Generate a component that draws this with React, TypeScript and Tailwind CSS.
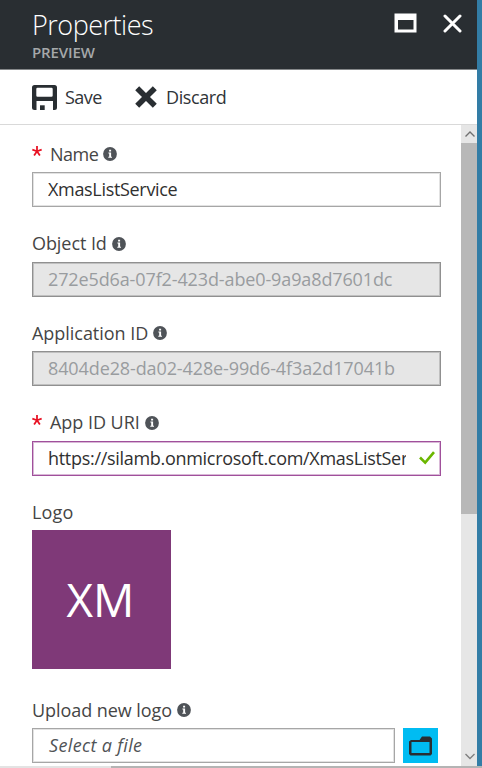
import React from "react";

function Info() {
  return (
    <svg className="ml-[5px] h-[14px] w-[14px] shrink-0" viewBox="0 0 14 14">
      <circle cx="7" cy="7" r="6.9" fill="#4f5358" />
      <path d="M5.4 5.6h2.7v4.2h.9v1H5.3v-1h.9V6.6h-.8zM6.1 2.8h2v1.7h-2z" fill="#fff" />
    </svg>
  );
}

type LabelProps = { text: string; tracking: string; required?: boolean; info?: boolean };

function Label({ text, tracking, required, info = true }: LabelProps) {
  return (
    <div className="flex h-[36px] items-center text-[18px] text-[#454545]">
      {required && (
        <svg className="mr-[8px] mb-[6px] h-[10px] w-[10px]" viewBox="0 0 9 9" stroke="#e81123" strokeWidth="1.6">
          <path d="M4.5 0v4.7M0.3 3.3l4.2 1.4M8.700 3.300L4.500 4.700M1.900 8.500l2.600-3.800M7.100 8.500L4.500 4.700" />
        </svg>
      )}
      <span className={`whitespace-nowrap ${tracking}`}>{text}</span>
      {info && <Info />}
    </div>
  );
}

function Field({
  label,
  box,
  value,
  tracking,
  valid,
}: {
  label: React.ReactNode;
  box: string;
  value: string;
  tracking: string;
  valid?: boolean;
}) {
  return (
    <div className="mb-[18.5px]">
      {label}
      <div className={`flex h-[35px] w-[409px] items-center border-[1px] pl-[15px] text-[18px] ${box}`}>
        <div className={`w-[358px] overflow-hidden whitespace-nowrap ${tracking}`}>{value}</div>
        {valid && (
          <svg className="ml-[13px] h-[14px] w-[16px] shrink-0" viewBox="0 0 16 14" fill="none" stroke="#6bb700" strokeWidth="2.6">
            <path d="M1 6.5l5.2 5.2L15 1.2" />
          </svg>
        )}
      </div>
    </div>
  );
}

export default function App() {
  return (
    <div className="flex h-[768px] w-[482px] flex-col overflow-hidden bg-white font-['Open_Sans','Noto_Sans',sans-serif]">
      <div className="flex h-[766px] shrink-0">
        <main className="flex w-[477px] shrink-0 flex-col">
          <header className="flex h-[70px] shrink-0 justify-between border-b border-[#85888a] bg-[#292e32] pl-[32px] text-white">
            <div>
              <h1 className="mt-[7px] h-[36px] whitespace-nowrap text-[27px] leading-[36px] font-light tracking-[-0.5px]">Properties</h1>
              <p className="h-[18px] text-[15px] leading-[18px] font-semibold tracking-[-0.1px] text-[#a5a8aa]">PREVIEW</p>
            </div>
            <div className="mr-[15px] flex gap-[26px] pt-[13px]">
              <svg className="h-[20px] w-[23px]" viewBox="0 0 23 20">
                <path fillRule="evenodd" d="M.5.5h22v19H.5zM4 7v9.5h15.500V7z" fill="#fff" />
              </svg>
              <svg className="mt-[1px] h-[19px] w-[19px]" viewBox="0 0 19 19" stroke="#fff" strokeWidth="3" strokeLinecap="round">
                <path d="M2 2l15 15M17 2L2 17" />
              </svg>
            </div>
          </header>
          <div className="flex h-[55px] shrink-0 items-center border-b border-[#d9d9d9] pl-[32px] text-[18px] text-[#303438]">
            <svg className="h-[25px] w-[25px]" viewBox="0 0 25 25">
              <path
                fillRule="evenodd"
                d="M2.500 0h20Q25 0 25 2.500v20Q25 25 22.500 25H21v-9H4.500v9H2.500Q0 25 0 22.500v-20Q0 0 2.500 0zM5.500 2.800Q4.300 2.800 4.300 4v6.500q0 1.200 1.200 1.200h14q1.200 0 1.200-1.200V4q0-1.200-1.200-1.200z"
                fill="#292e32"
              />
              <path d="M8 20.300h4.700V25H8z" fill="#292e32" />
            </svg>
            <span className="ml-[8px] w-[38px] tracking-[-0.5px]">Save</span>
            <svg className="ml-[32px] h-[22px] w-[22px]" viewBox="0 0 22 22" stroke="#292e32" strokeWidth="5.6">
              <path d="M2.200 2.200l17.600 17.600M19.800 2.200L2.200 19.800" />
            </svg>
            <span className="ml-[9px] tracking-[-0.4px]">Discard</span>
          </div>
          <div className="flex min-h-0 flex-1">
            <section className="w-[461px] shrink-0 overflow-hidden pt-[11px] pl-[32px]">
              <Field
                label={<Label required text="Name" tracking="tracking-[-0.5px]" />}
                box="border-[#a6a6a6] text-[#303030] shadow-[inset_0_0_0_1px_#e2e2e2]"
                value="XmasListService"
                tracking="tracking-[-0.32px]"
              />
              <Field
                label={<Label text="Object Id" tracking="tracking-[-0.07px]" />}
                box="border-[#909090] bg-[#e6e6e6] text-[#999c9f] shadow-[inset_0_0_0_1px_#c0c0c0]"
                value="272e5d6a-07f2-423d-abe0-9a9a8d7601dc"
                tracking="tracking-[-0.12px]"
              />
              <Field
                label={<Label text="Application ID" tracking="tracking-[-0.04px]" />}
                box="border-[#909090] bg-[#e6e6e6] text-[#999c9f] shadow-[inset_0_0_0_1px_#c0c0c0]"
                value="8404de28-da02-428e-99d6-4f3a2d17041b"
                tracking="tracking-[-0.11px]"
              />
              <Field
                label={<Label required text="App ID URI" tracking="tracking-[-0.04px]" />}
                box="border-[#a0509b] text-[#303030] shadow-[inset_0_0_0_1px_#d9b8d7]"
                value="https://silamb.onmicrosoft.com/XmasListService"
                tracking="tracking-[-0.3px]"
                valid
              />
              <Label text="Logo" tracking="tracking-[0.15px]" info={false} />
              <div className="mb-[23px] flex h-[139px] w-[139px] items-center justify-center bg-[#7f3978] text-[46px] text-white">
                <span className="mr-[2px] tracking-[0px]">XM</span>
              </div>
              <Label text="Upload new logo" tracking="tracking-[-0.07px]" />
              <div className="flex">
                <div className="flex h-[35px] w-[363px] shrink-0 items-center border border-[#a6a6a6] pl-[16px] text-[18px] text-[#505356] italic shadow-[inset_0_0_0_1px_#e2e2e2]">
                  <span className="tracking-[0.35px]">Select a file</span>
                </div>
                <div className="ml-[8px] flex h-[35px] w-[35px] shrink-0 items-center justify-center bg-[#00bcf2]">
                  <svg className="h-[20px] w-[23px]" viewBox="0 0 23 20">
                    <path fillRule="evenodd" d="M2 4h8.500l2.500-3.500h8L23 2.500V18l-1.500 1.500h-20L0 18V5.500zM2.500 6v11h18V6z" fill="#292e32" />
                  </svg>
                </div>
              </div>
            </section>
            <div className="flex w-[16px] shrink-0 flex-col bg-[#e6e6e6]">
              <svg className="h-[18px] w-[16px]" viewBox="0 0 16 18" fill="none" stroke="#707070" strokeWidth="1.400">
                <path d="M4.500 11.500l4.500-4.500 4.500 4.500" />
              </svg>
              <div className="h-[371px] bg-[#b8b8b8]" />
              <svg className="mt-auto h-[18px] w-[16px]" viewBox="0 0 16 18" fill="none" stroke="#808080" strokeWidth="1.400">
                <path d="M4.500 6l4.500 4.500L13.500 6" />
              </svg>
            </div>
          </div>
        </main>
        <div className="flex-1 bg-[#337da6]" />
      </div>
      <div className="flex h-[2px] bg-[#e3e3e3]">
        <div className="ml-[111px] flex-1 bg-[#b4b4b4]" />
      </div>
    </div>
  );
}
